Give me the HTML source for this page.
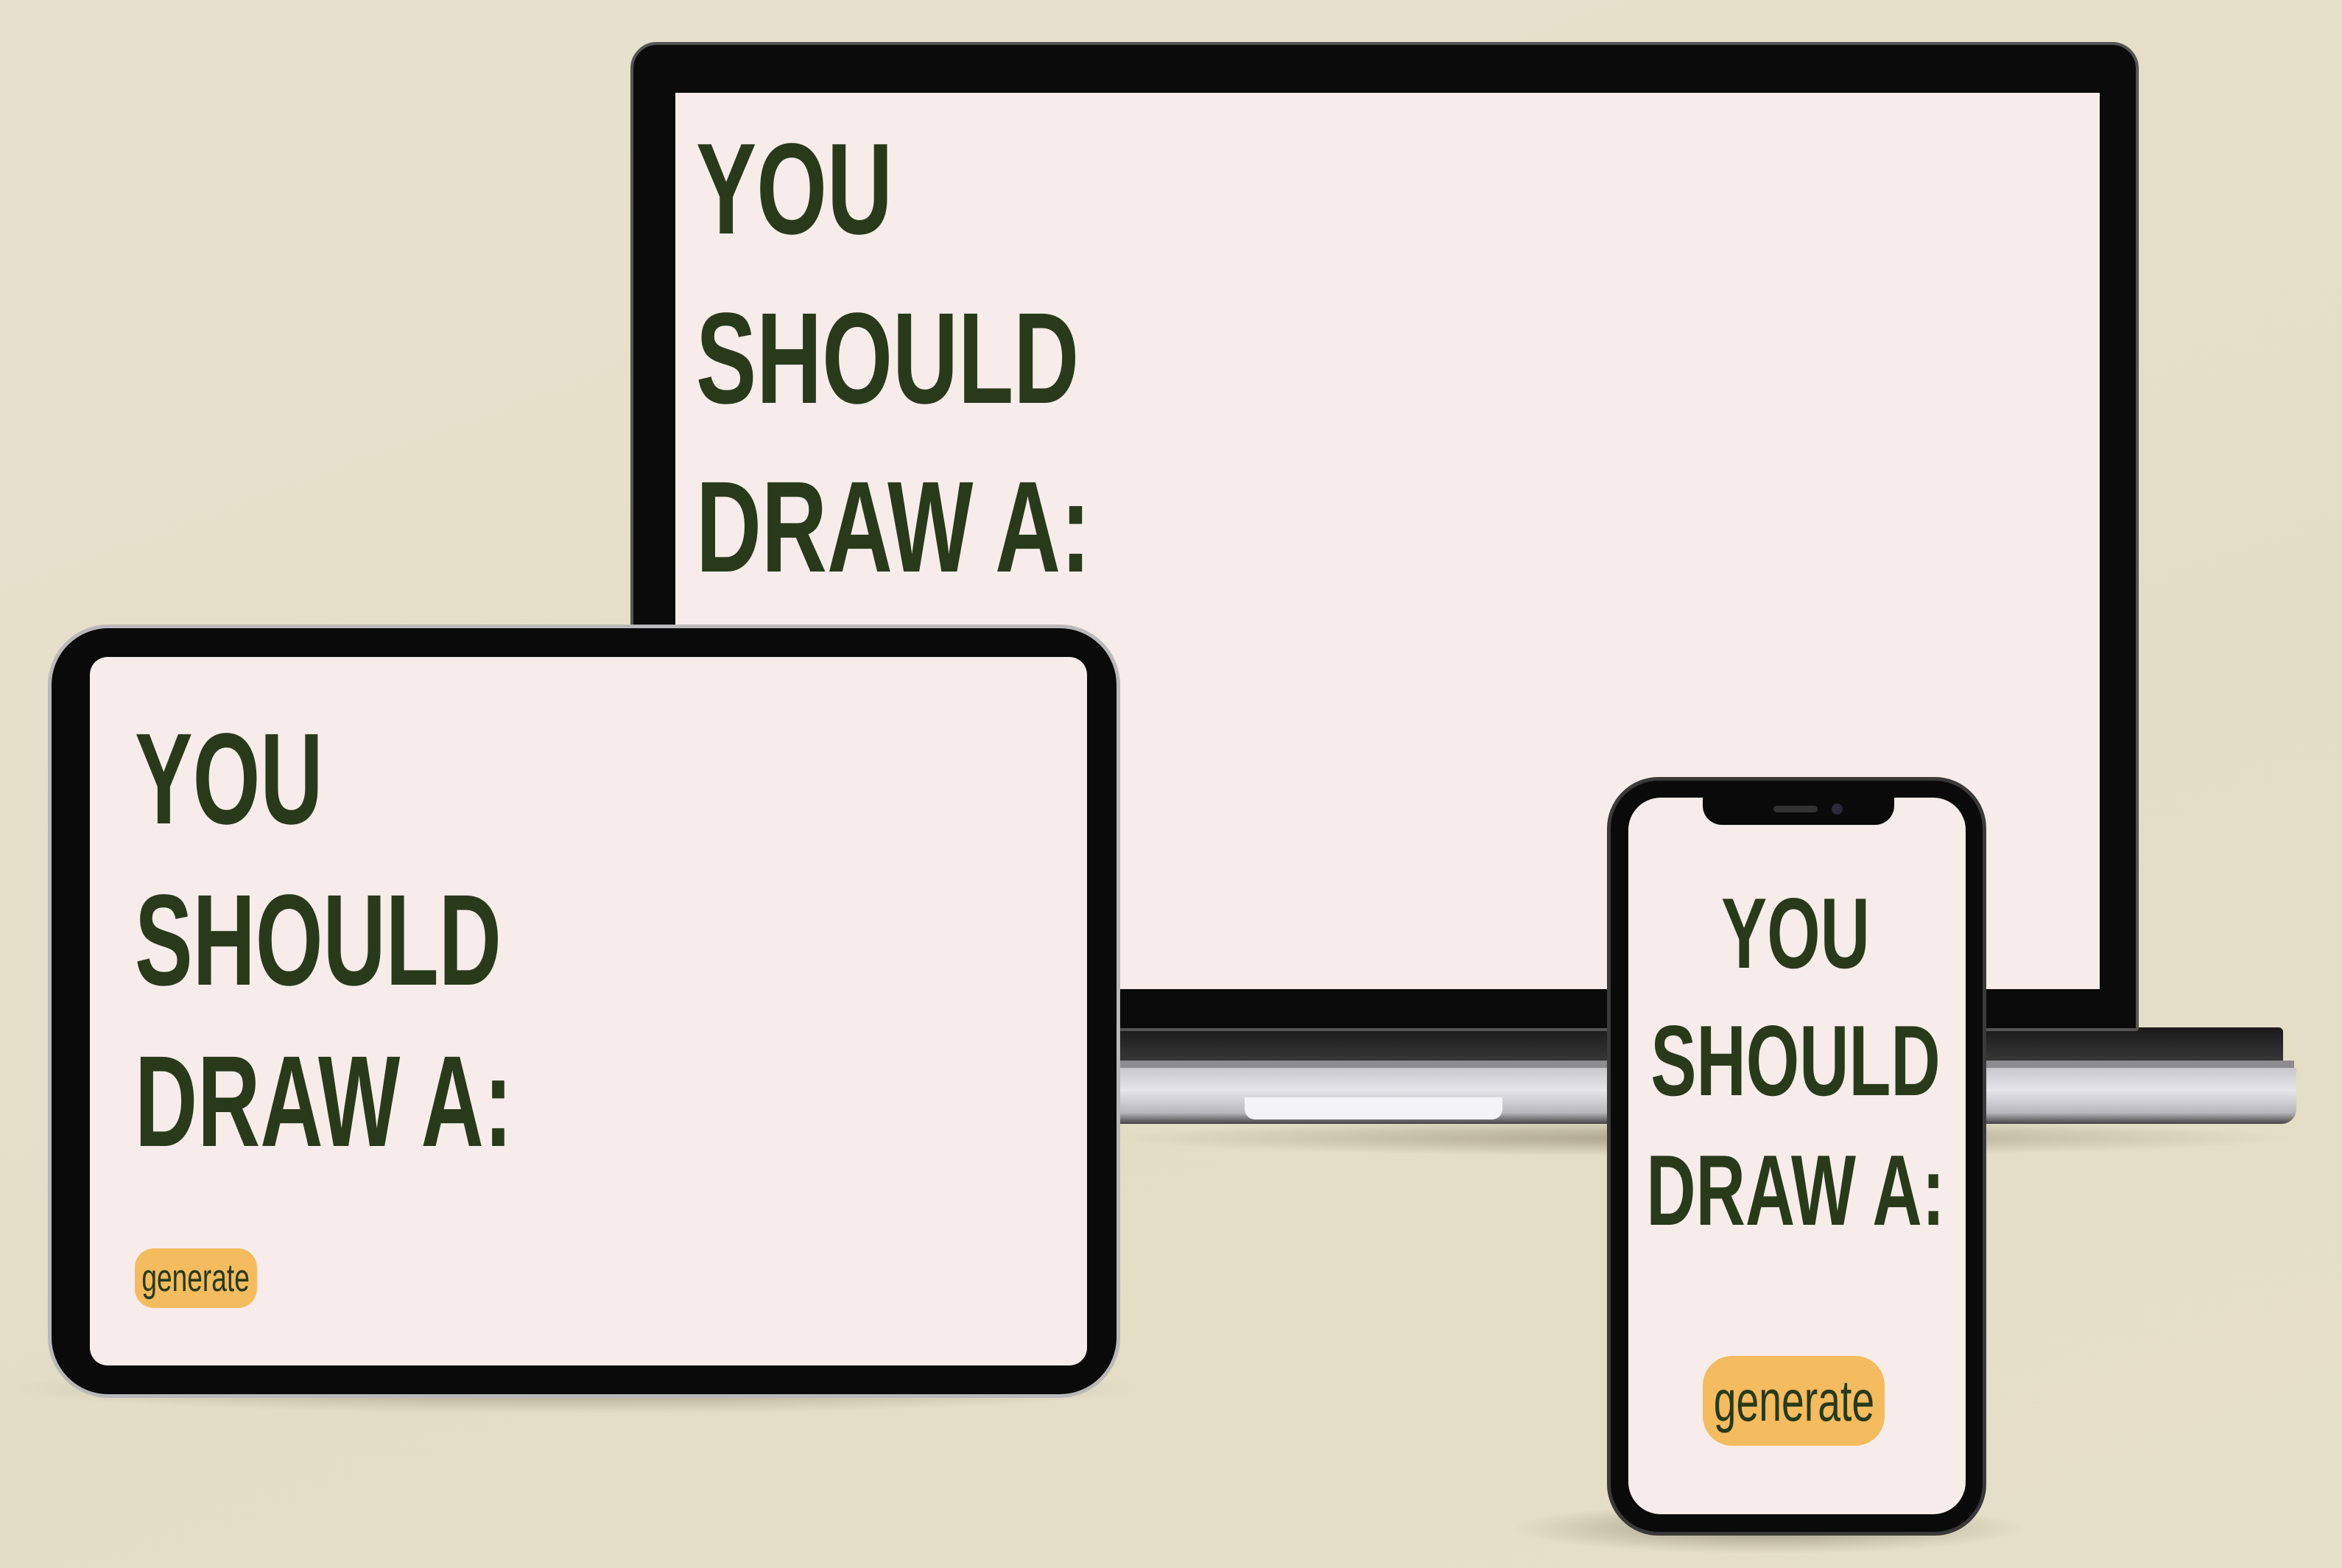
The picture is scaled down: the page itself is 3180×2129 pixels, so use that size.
<!DOCTYPE html>
<html><head><meta charset="utf-8"><style>
*{margin:0;padding:0;box-sizing:border-box}
body{width:3180px;height:2129px;overflow:hidden;position:relative;background:linear-gradient(160deg,#e7e2cf 0%,#e4ddc6 60%,#e6dfc8 100%);font-family:"Liberation Sans",sans-serif}
.abs{position:absolute}
.t{position:absolute;color:#283a1a;font-weight:bold;line-height:1;white-space:nowrap;transform-origin:0 0}
.btn{position:absolute;background:#f4bb5f;color:#283a1a;display:flex;align-items:center;justify-content:center;overflow:hidden}
.btn span{display:inline-block;transform:scaleX(.7);white-space:nowrap}
</style></head><body>
<!-- laptop shadow & base -->
<div class="abs" style="left:1500px;top:1520px;width:1620px;height:50px;background:radial-gradient(ellipse at center,rgba(60,50,30,.35),rgba(0,0,0,0) 70%)"></div>
<div class="abs" style="left:1300px;top:1395px;width:1800px;height:50px;background:linear-gradient(#1a1a1a,#3a3a3a);border-radius:6px"></div>
<div class="abs" style="left:1300px;top:1440px;width:1815px;height:14px;background:#8d8d90"></div>
<div class="abs" style="left:1300px;top:1450px;width:1818px;height:76px;background:linear-gradient(#c8c8cc,#e6e6e9 40%,#b8b8bc 80%,#444 100%);border-radius:0 0 20px 14px"></div>
<div class="abs" style="left:1690px;top:1490px;width:350px;height:30px;background:#f4f4f6;border-radius:0 0 14px 14px"></div>
<!-- laptop lid -->
<div class="abs" style="left:856px;top:57px;width:2048px;height:1343px;background:#0b0b0b;border-radius:36px 36px 4px 4px;border:4px solid #555"></div>
<div class="abs" style="left:917px;top:126px;width:1934px;height:1217px;background:#f7ecea"></div>
<div class="t" style="left:945px;top:169px;font-size:176px;transform:scaleX(.70)">YOU</div>
<div class="t" style="left:945px;top:399px;font-size:176px;transform:scaleX(.70)">SHOULD</div>
<div class="t" style="left:945px;top:628px;font-size:176px;transform:scaleX(.70)">DRAW A:</div>
<!-- tablet -->
<div class="abs" style="left:0px;top:1850px;width:1560px;height:70px;background:radial-gradient(ellipse at center,rgba(60,50,30,.35),rgba(0,0,0,0) 70%)"></div>
<div class="abs" style="left:65px;top:848px;width:1456px;height:1050px;background:#0a0a0a;border-radius:82px;border:5px solid #b9b9bb"></div>
<div class="abs" style="left:122px;top:892px;width:1354px;height:962px;background:#f7ecea;border-radius:24px"></div>
<div class="t" style="left:183px;top:970px;font-size:176px;transform:scaleX(.67)">YOU</div>
<div class="t" style="left:183px;top:1189px;font-size:176px;transform:scaleX(.67)">SHOULD</div>
<div class="t" style="left:183px;top:1408px;font-size:176px;transform:scaleX(.67)">DRAW A:</div>
<div class="btn" style="left:183px;top:1695px;width:166px;height:81px;border-radius:26px;font-size:53px"><span>generate</span></div>
<!-- phone -->
<div class="abs" style="left:2050px;top:2040px;width:700px;height:70px;background:radial-gradient(ellipse at center,rgba(60,50,30,.4),rgba(0,0,0,0) 70%)"></div>
<div class="abs" style="left:2182px;top:1055px;width:515px;height:1030px;background:#0a0a0a;border-radius:70px;border:5px solid #3a3a3a"></div>
<div class="abs" style="left:2211px;top:1083px;width:458px;height:973px;background:#f7ecea;border-radius:44px"></div>
<div class="abs" style="left:2312px;top:1080px;width:260px;height:40px;background:#0a0a0a;border-radius:0 0 26px 26px"></div>
<div class="abs" style="left:2408px;top:1094px;width:60px;height:9px;background:#333;border-radius:5px"></div>
<div class="abs" style="left:2487px;top:1091px;width:15px;height:15px;background:#2a2a3a;border-radius:50%"></div>
<div class="t" style="left:2438px;top:1199px;font-size:136px;transform:translateX(-50%) scaleX(.685);transform-origin:50% 0">YOU</div>
<div class="t" style="left:2438px;top:1372px;font-size:136px;transform:translateX(-50%) scaleX(.685);transform-origin:50% 0">SHOULD</div>
<div class="t" style="left:2438px;top:1548px;font-size:136px;transform:translateX(-50%) scaleX(.685);transform-origin:50% 0">DRAW A:</div>
<div class="btn" style="left:2312px;top:1841px;width:247px;height:122px;border-radius:40px;font-size:79px"><span>generate</span></div>
</body></html>
